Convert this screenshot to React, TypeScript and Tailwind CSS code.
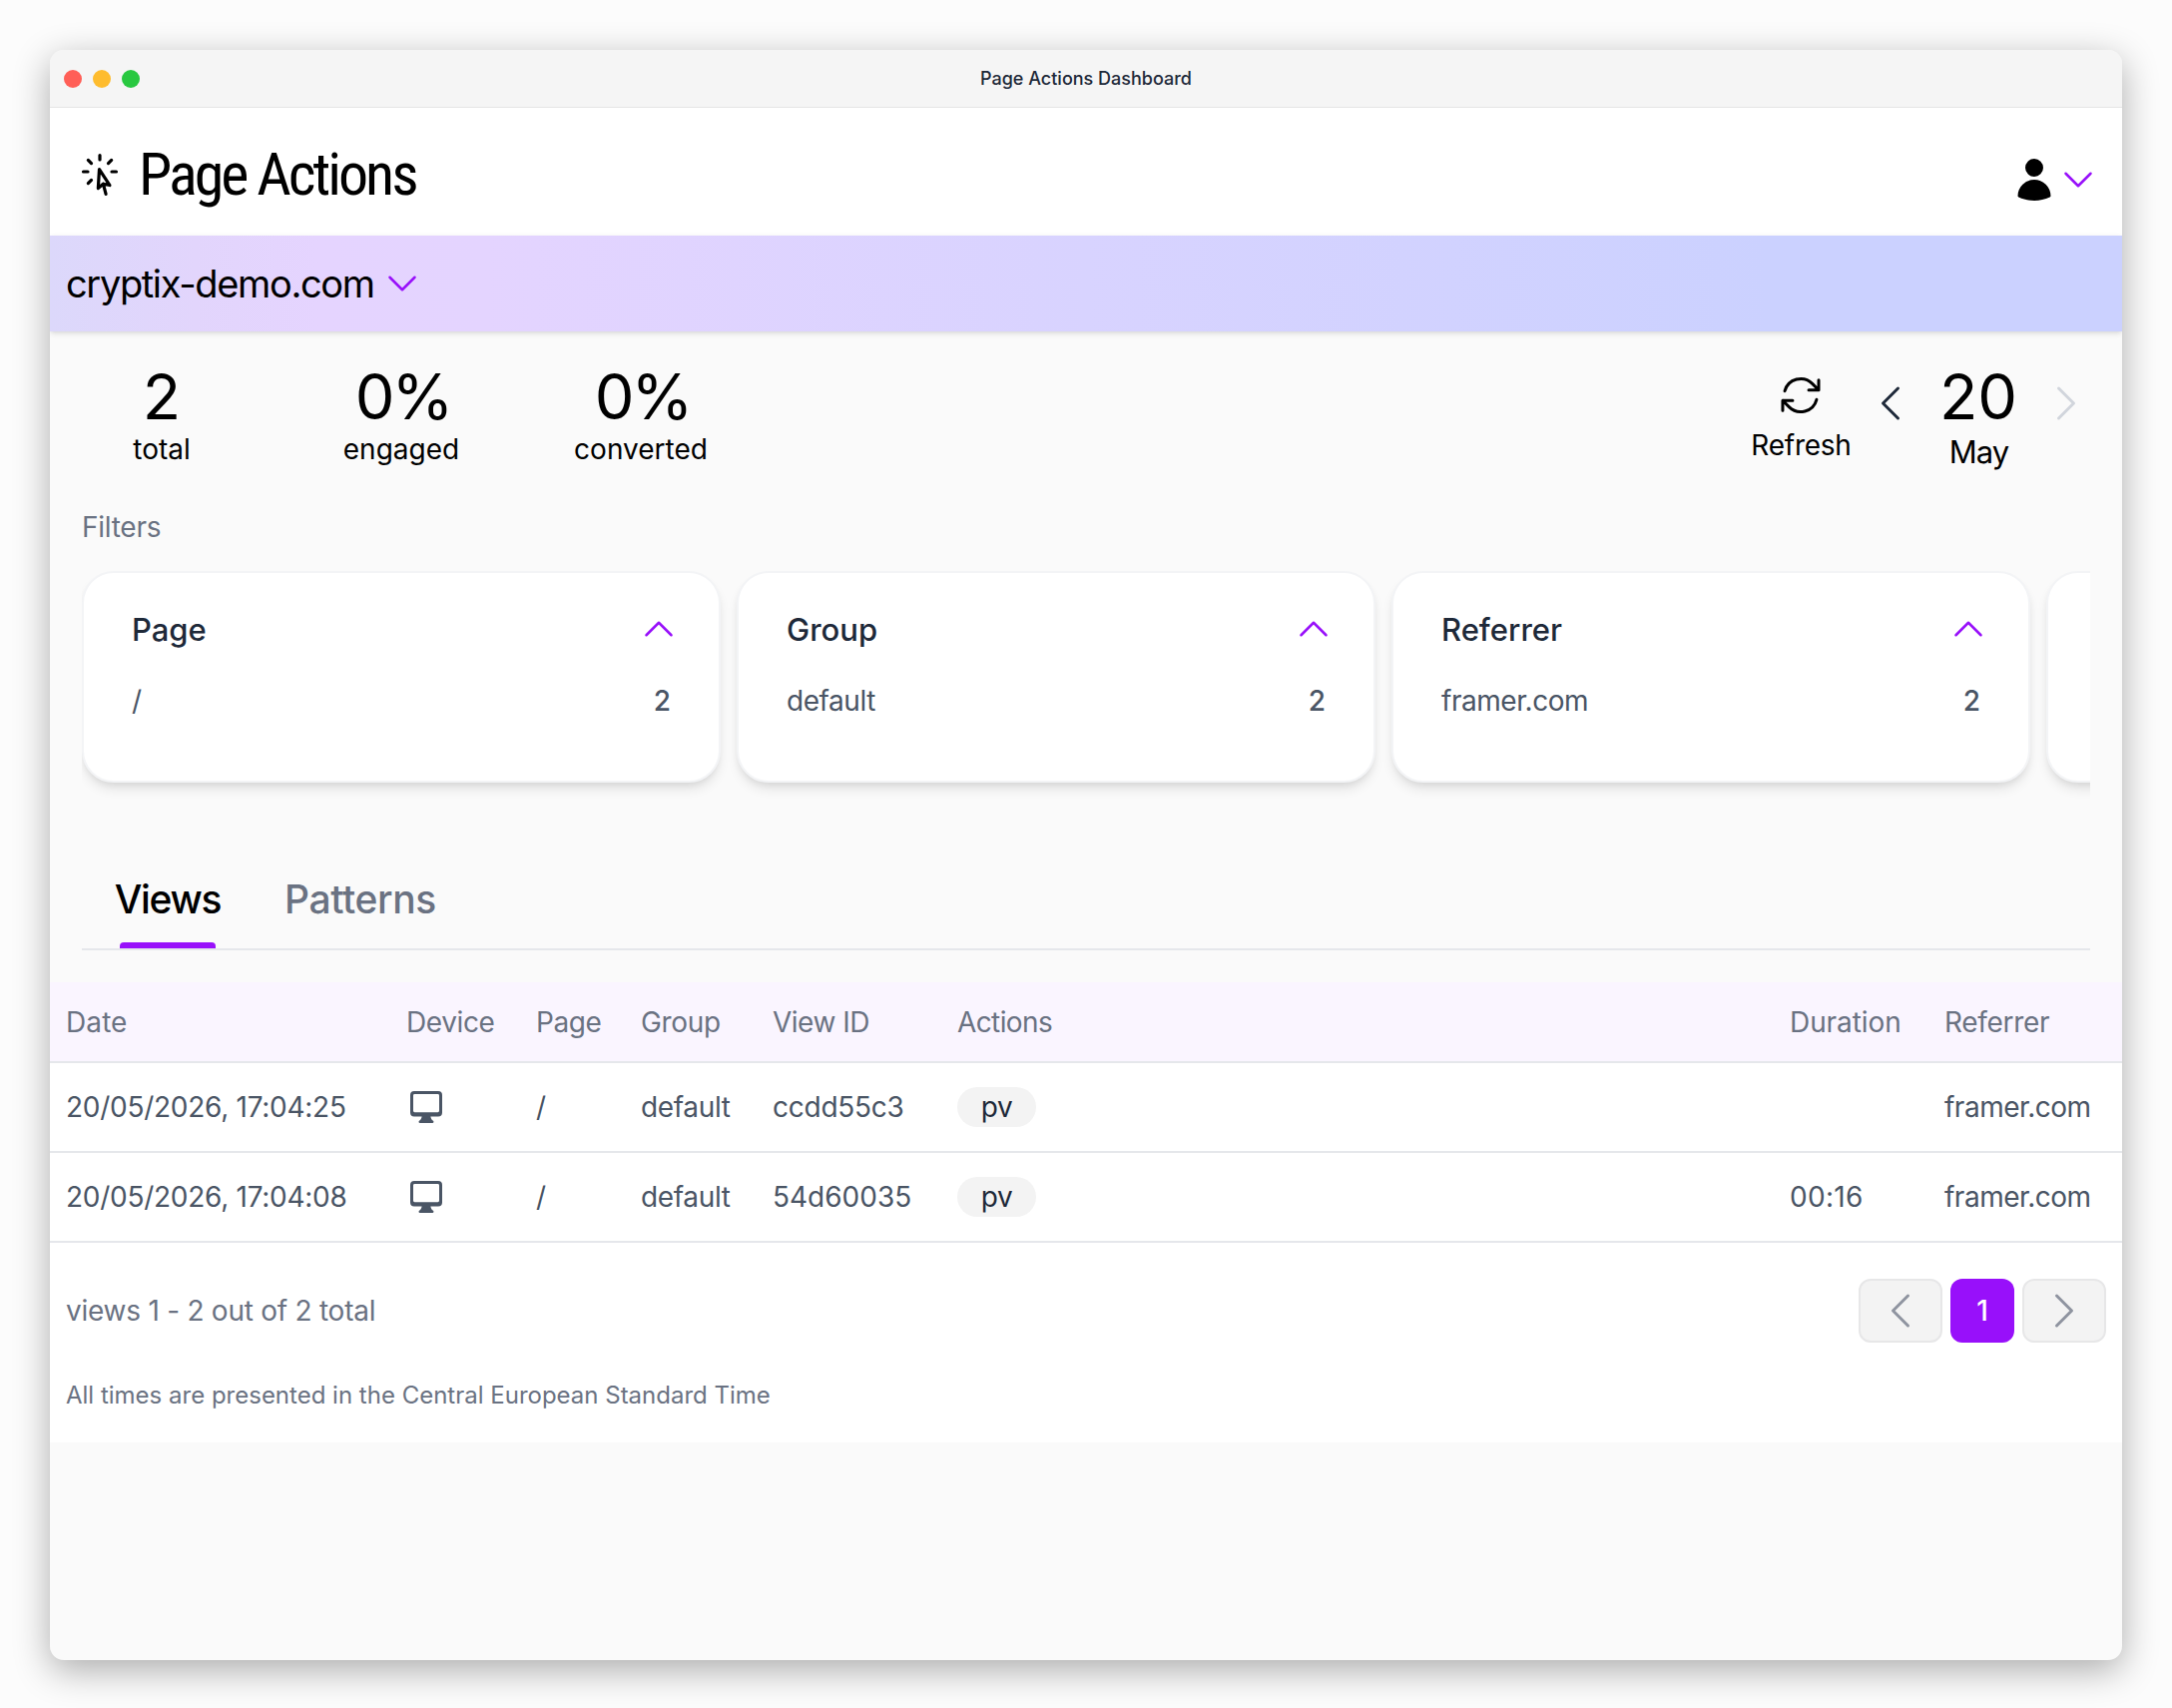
import type { ReactNode } from "react";

function Icon({ d, className, strokeWidth = 1.5 }: { d: string; className: string; strokeWidth?: number }) {
  return (
    <svg
      viewBox="0 0 24 24"
      fill="none"
      stroke="currentColor"
      strokeWidth={strokeWidth}
      strokeLinecap="round"
      strokeLinejoin="round"
      className={className}
    >
      <path d={d} />
    </svg>
  );
}

const chevronDown = "M19.5 8.25l-7.5 7.5-7.5-7.5";
const chevronUp = "M4.5 15.75l7.5-7.5 7.5 7.5";
const chevronLeft = "M15.75 19.5L8.25 12l7.5-7.5";
const chevronRight = "M8.25 4.5l7.5 7.5-7.5 7.5";
const arrowPath =
  "M16.023 9.348h4.992v-.001M2.985 19.644v-4.992m0 0h4.992m-4.993 0l3.181 3.183a8.25 8.25 0 0013.803-3.7M4.031 9.865a8.25 8.25 0 0113.803-3.7l3.181 3.182m0-4.991v4.99";
const cursorRays =
  "M15.042 21.672L13.684 16.6m0 0l-2.51 2.225.569-9.47 5.227 7.917-3.286-.672zM12 2.25v2.25m5.834.166l-1.591 1.591M20.25 10.5H18M7.757 14.743l-1.59 1.59M6 10.5H3.75m4.007-4.243l-1.59-1.59";

function UserIcon() {
  return (
    <svg viewBox="0 0 24 24" fill="currentColor" className="size-12">
      <path
        fillRule="evenodd"
        clipRule="evenodd"
        d="M7.5 6a4.5 4.5 0 119 0 4.5 4.5 0 01-9 0zM3.751 20.105a8.25 8.25 0 0116.498 0 .75.75 0 01-.437.695A18.683 18.683 0 0112 22.5c-2.786 0-5.433-.608-7.812-1.7a.75.75 0 01-.437-.695z"
      />
    </svg>
  );
}

function MonitorIcon() {
  return (
    <svg viewBox="0 0 32 32" className="ml-1 size-8" fill="currentColor">
      <path
        fillRule="evenodd"
        clipRule="evenodd"
        d="M4 0h24a4 4 0 0 1 4 4v17.6a4 4 0 0 1-4 4h-7.6c.3 2 1 3.2 2.6 4.2.9.7.6 2.2-.7 2.2H9.7c-1.3 0-1.6-1.5-.7-2.2 1.6-1 2.3-2.2 2.6-4.2H4a4 4 0 0 1-4-4V4a4 4 0 0 1 4-4zM4.4 3A1.4 1.4 0 0 0 3 4.4v15.4A1.4 1.4 0 0 0 4.4 21.2h23.2a1.4 1.4 0 0 0 1.4-1.4V4.4A1.4 1.4 0 0 0 27.6 3z"
      />
    </svg>
  );
}

function Stat({ value, label, valueClass = "" }: { value: string; label: string; valueClass?: string }) {
  return (
    <div className="flex w-52 flex-col items-center">
      <span className={`text-[63px] leading-[64px] font-[430] ${valueClass}`}>{value}</span>
      <span className="mt-px leading-10">{label}</span>
    </div>
  );
}

function FilterCard({ title, name, count }: { title: string; name: string; count: string }) {
  return (
    <div className="h-[212px] w-[640px] shrink-0 rounded-[32px] border-2 border-[#f3f4f6] bg-white px-12 pt-[37px] shadow-[0_8px_12px_-2px_rgba(0,0,0,0.1),0_4px_8px_-4px_rgba(0,0,0,0.1)]">
      <div className="flex h-10 items-center justify-between">
        <h3 className="text-[31px] leading-10 font-medium text-[#1e2939]">{title}</h3>
        <Icon d={chevronUp} className="-mr-2 size-10 -translate-y-px text-[#9810fa]" />
      </div>
      <div className="mt-[31px] flex h-10 items-center justify-between text-[#4a5565]">
        <span className="tracking-[-0.45px]">{name}</span>
        <span className="font-medium">{count}</span>
      </div>
    </div>
  );
}

const columns =
  "grid grid-cols-[341px_130px_105px_132px_185px_834px_155px_1fr] items-center border-b-2 border-[#e5e7eb] pl-4";

function Row({ date, id, duration }: { date: string; id: ReactNode; duration: string }) {
  return (
    <div className={`${columns} h-[90px] text-[#4a5565]`}>
      <span className="tracking-[-0.27px]">{date}</span>
      <MonitorIcon />
      <span>/</span>
      <span className="tracking-[-0.35px]">default</span>
      {id}
      <span className="flex h-10 w-[79px] items-center justify-center rounded-full bg-[#f3f3f3] tracking-[-0.5px] text-[#1e2939]">
        pv
      </span>
      <span className="tracking-[0.3px]">{duration}</span>
      <span className="tracking-[-0.5px]">framer.com</span>
    </div>
  );
}

export default function App() {
  return (
    <div className="h-[1711px] w-[2176px] bg-[#fcfcfc] pt-[50px] pl-[50px] font-['Inter',sans-serif] text-[28px] leading-10 text-black">
      <div className="flex h-[1613px] w-[2076px] flex-col overflow-hidden rounded-[14px] bg-[#fafafa] shadow-[0_10px_36px_rgba(0,0,0,0.32)]">
        <div className="grid h-[58px] shrink-0 grid-cols-[1fr_auto_1fr] items-center border-b border-[#e5e5e5] bg-[#f5f5f5]">
          <div className="flex gap-[11px] pl-[14px]">
            <span className="size-[18px] rounded-full bg-[#ff5f57]" />
            <span className="size-[18px] rounded-full bg-[#febc2e]" />
            <span className="size-[18px] rounded-full bg-[#28c840]" />
          </div>
          <span className="text-[18px] leading-6 font-medium text-[#1e2939]">Page Actions Dashboard</span>
        </div>

        <header className="flex h-32 shrink-0 items-center justify-between bg-white pr-6 pl-[26px]">
          <div className="flex items-center pt-[6px]">
            <Icon d={cursorRays} className="size-12" strokeWidth={1.6} />
            <h1 className="ml-[15px] font-['Roboto_Condensed',Roboto,sans-serif] text-[60px] leading-[64px] tracking-[-3px] [font-stretch:75%]">
              Page Actions
            </h1>
          </div>
          <div className="flex items-center pt-4">
            <UserIcon />
            <Icon d={chevronDown} className="size-10 text-[#9810fa]" />
          </div>
        </header>

        <div className="relative flex h-24 shrink-0 items-center bg-[linear-gradient(90deg,#dcd8fb_0%,#e2d5fc_7%,#e5d4ff_13%,#e4d4ff_21%,#d8d3ff_50%,#cbd1ff_83%,#cbd1ff_100%)] pl-4 shadow-[0_2px_6px_rgba(0,0,0,0.1),0_2px_4px_-2px_rgba(0,0,0,0.1)]">
          <span className="text-[38px] tracking-[-1.36px]">cryptix-demo.com</span>
          <Icon d={chevronDown} className="ml-2 size-10 text-[#9810fa]" />
        </div>

        <section className="flex h-[176px] shrink-0 justify-between pt-[33px] pr-8 pl-2">
          <div className="flex gap-8">
            <Stat value="2" label="total" />
            <Stat value="0%" label="engaged" valueClass="pl-[3px] tracking-[-3px]" />
            <Stat value="0%" label="converted" valueClass="pl-[3px] tracking-[-3px]" />
          </div>
          <div className="flex items-start">
            <div className="mt-[7px] mr-[6px] flex w-[120px] flex-col items-center">
              <Icon d={arrowPath} className="size-12" />
              <span className="mt-[6px] pl-px tracking-[-0.25px]">Refresh</span>
            </div>
            <Icon d={chevronLeft} className="mt-[15px] size-12 text-[#1e2939]" />
            <div className="flex w-32 flex-col items-center">
              <span className="text-[63px] leading-[64px] font-[430]">20</span>
              <span className="mt-1 pl-px text-[31px] tracking-[-1px]">May</span>
            </div>
            <Icon d={chevronRight} className="mt-[15px] size-12 text-[#d1d5dc]" />
          </div>
        </section>

        <h2 className="ml-8 shrink-0 tracking-[-0.26px] text-[#6a7282]">Filters</h2>

        <div className="mx-8 mt-2 flex h-[260px] shrink-0 gap-4 overflow-hidden pt-4">
          <FilterCard title="Page" name="/" count="2" />
          <FilterCard title="Group" name="default" count="2" />
          <FilterCard title="Referrer" name="framer.com" count="2" />
          <FilterCard title="" name="" count="" />
        </div>

        <nav className="mx-8 mt-[61px] flex shrink-0 gap-[63px] border-b-2 border-[#e5e7eb] pl-8 text-[39px] leading-[48px] font-medium">
          <div className="flex w-[108px] flex-col items-center">
            <span className="tracking-[-1.3px]">Views</span>
            <span className="mt-[19px] h-[6px] w-24 rounded-t-[4px] bg-[#9810fa]" />
          </div>
          <span className="tracking-[-0.4px] text-[#6a7282]">Patterns</span>
        </nav>

        <div className="mt-8 flex shrink-0 flex-col bg-white">
          <div className={`${columns} h-[81px] bg-[#faf5ff] text-[#6a7282]`}>
            <span className="tracking-[0.1px]">Date</span>
            <span className="tracking-[-0.4px]">Device</span>
            <span className="tracking-[-0.4px]">Page</span>
            <span className="tracking-[-0.3px]">Group</span>
            <span className="tracking-[-0.5px]">View ID</span>
            <span className="tracking-[-0.6px]">Actions</span>
            <span className="tracking-[-0.07px]">Duration</span>
            <span className="tracking-[-0.3px]">Referrer</span>
          </div>
          <Row date="20/05/2026, 17:04:25" id={<span className="tracking-[-0.25px]">ccdd55c3</span>} duration="" />
          <Row date="20/05/2026, 17:04:08" id={<span>54d60035</span>} duration="00:16" />

          <div className="flex items-center justify-between px-4 pt-9">
            <span className="tracking-[-0.25px] text-[#6a7282]">views 1 - 2 out of 2 total</span>
            <div className="flex gap-2">
              <button className="flex h-16 w-[84px] items-center justify-center rounded-xl border-2 border-[#e7e7e8] bg-[#f3f3f3] text-[#8f94a0]">
                <Icon d={chevronLeft} className="size-12" />
              </button>
              <button className="size-16 rounded-xl bg-[#9810fa] font-medium text-white">1</button>
              <button className="flex h-16 w-[84px] items-center justify-center rounded-xl border-2 border-[#e7e7e8] bg-[#f3f3f3] text-[#8f94a0]">
                <Icon d={chevronRight} className="size-12" />
              </button>
            </div>
          </div>
          <p className="mt-[37px] pb-[31px] pl-4 text-2xl leading-8 text-[#6a7282]">
            All times are presented in the Central European Standard Time
          </p>
        </div>
      </div>
    </div>
  );
}
